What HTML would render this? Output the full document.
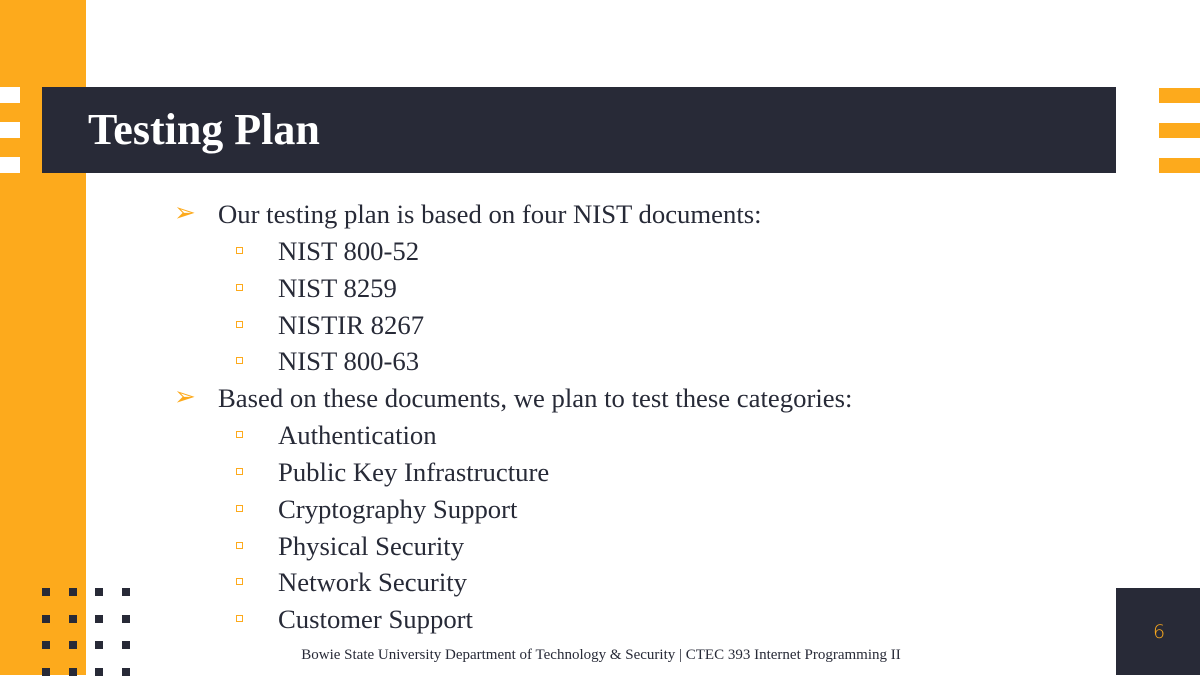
<!DOCTYPE html>
<html><head><meta charset="utf-8"><style>
*{margin:0;padding:0;box-sizing:border-box}
body{width:1200px;height:675px;position:relative;overflow:hidden;background:#fff;font-family:"Liberation Serif",serif;color:#272a37}
.a{position:absolute}
.o{background:#fdaa1c}
.d{background:#282a37}
.w{background:#fff}
.dot{position:absolute;width:8px;height:8px;background:#282a37}
.l{position:absolute;font-size:26.7px;line-height:30px;white-space:nowrap}
.ar{position:absolute;color:#fdaa1c;font-size:26px;line-height:30px}
.sq{position:absolute;width:7px;height:7px;border:1.5px solid #fdaa1c}
</style></head><body>
<div class="a o" style="left:0;top:0;width:86px;height:675px"></div>
<div class="a d" style="left:42px;top:87px;width:1074px;height:86px"></div>
<div class="a w" style="left:0;top:87px;width:20px;height:16px"></div>
<div class="a w" style="left:0;top:122px;width:20px;height:16px"></div>
<div class="a w" style="left:0;top:157px;width:20px;height:16px"></div>
<div class="a o" style="left:1159px;top:88px;width:41px;height:15px"></div>
<div class="a o" style="left:1159px;top:123px;width:41px;height:15px"></div>
<div class="a o" style="left:1159px;top:158px;width:41px;height:15px"></div>
<div class="a" style="left:88px;top:105px;font-size:44px;font-weight:bold;color:#fff;line-height:50px">Testing Plan</div>

<div class="ar" style="left:174px;top:198px">➢</div><div class="l" style="left:218px;top:199px">Our testing plan is based on four NIST documents:</div>
<div class="sq" style="left:236px;top:247px"></div><div class="l" style="left:278px;top:236px">NIST 800-52</div>
<div class="sq" style="left:236px;top:284px"></div><div class="l" style="left:278px;top:273px">NIST 8259</div>
<div class="sq" style="left:236px;top:321px"></div><div class="l" style="left:278px;top:310px">NISTIR 8267</div>
<div class="sq" style="left:236px;top:357px"></div><div class="l" style="left:278px;top:346px">NIST 800-63</div>
<div class="ar" style="left:174px;top:382px">➢</div><div class="l" style="left:218px;top:383px">Based on these documents, we plan to test these categories:</div>
<div class="sq" style="left:236px;top:431px"></div><div class="l" style="left:278px;top:420px">Authentication</div>
<div class="sq" style="left:236px;top:468px"></div><div class="l" style="left:278px;top:457px">Public Key Infrastructure</div>
<div class="sq" style="left:236px;top:505px"></div><div class="l" style="left:278px;top:494px">Cryptography Support</div>
<div class="sq" style="left:236px;top:542px"></div><div class="l" style="left:278px;top:531px">Physical Security</div>
<div class="sq" style="left:236px;top:578px"></div><div class="l" style="left:278px;top:567px">Network Security</div>
<div class="sq" style="left:236px;top:615px"></div><div class="l" style="left:278px;top:604px">Customer Support</div>

<div class="a" style="left:0;width:1202px;top:646px;text-align:center;font-size:15px;line-height:18px">Bowie State University Department of Technology &amp; Security | CTEC 393 Internet Programming II</div>

<div class="dot" style="left:42px;top:588px"></div><div class="dot" style="left:69px;top:588px"></div><div class="dot" style="left:95px;top:588px"></div><div class="dot" style="left:122px;top:588px"></div>
<div class="dot" style="left:42px;top:615px"></div><div class="dot" style="left:69px;top:615px"></div><div class="dot" style="left:95px;top:615px"></div><div class="dot" style="left:122px;top:615px"></div>
<div class="dot" style="left:42px;top:641px"></div><div class="dot" style="left:69px;top:641px"></div><div class="dot" style="left:95px;top:641px"></div><div class="dot" style="left:122px;top:641px"></div>
<div class="dot" style="left:42px;top:668px"></div><div class="dot" style="left:69px;top:668px"></div><div class="dot" style="left:95px;top:668px"></div><div class="dot" style="left:122px;top:668px"></div>

<div class="a d" style="left:1116px;top:588px;width:84px;height:87px"></div>
<div class="a" style="left:1117px;width:84px;top:620px;text-align:center;color:#fdaa1c;font-family:'DejaVu Sans',sans-serif;font-size:19px;font-weight:200;line-height:24px">6</div>
</body></html>
